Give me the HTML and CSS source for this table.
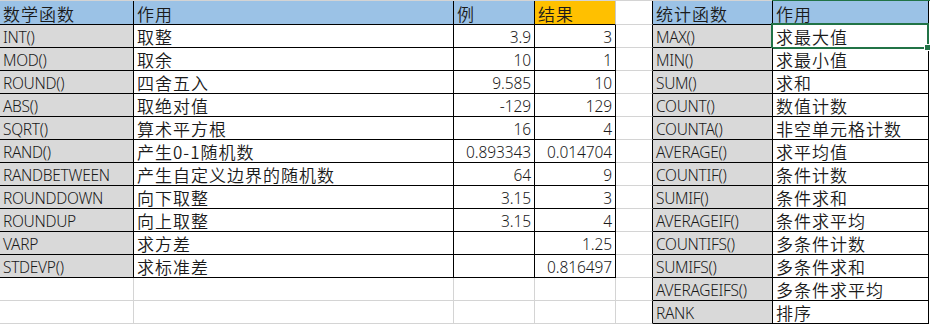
FILE: index.html
```html
<!DOCTYPE html>
<html lang="zh">
<head>
<meta charset="utf-8">
<link rel="stylesheet" href="styles.css">
</head>
<body>
<div class="sheet">
  <!-- row 1 header -->
  <div class="c hd t blue zh">数学函数</div>
  <div class="c hd t blue zh">作用</div>
  <div class="c hd t blue zh">例</div>
  <div class="c hd t orange zh endg">结果</div>
  <div class="c hd eb"></div>
  <div class="c hd t blue zh">统计函数</div>
  <div class="c hd t blue zh topsel">作用</div>
  <div class="c hd x"></div>

  <div class="c t gray en">INT()</div><div class="c t zh">取整</div><div class="c t num">3.9</div><div class="c t num">3</div><div class="c eb"></div><div class="c t gray en">MAX()</div><div class="c t zh sel">求最大值</div><div class="c x"></div>
  <div class="c t gray en">MOD()</div><div class="c t zh">取余</div><div class="c t num">10</div><div class="c t num">1</div><div class="c eb"></div><div class="c t gray en">MIN()</div><div class="c t zh">求最小值</div><div class="c x"></div>
  <div class="c t gray en">ROUND()</div><div class="c t zh">四舍五入</div><div class="c t num">9.585</div><div class="c t num">10</div><div class="c eb"></div><div class="c t gray en">SUM()</div><div class="c t zh">求和</div><div class="c x"></div>
  <div class="c t gray en">ABS()</div><div class="c t zh">取绝对值</div><div class="c t num">-129</div><div class="c t num">129</div><div class="c eb"></div><div class="c t gray en">COUNT()</div><div class="c t zh">数值计数</div><div class="c x"></div>
  <div class="c t gray en">SQRT()</div><div class="c t zh">算术平方根</div><div class="c t num">16</div><div class="c t num">4</div><div class="c eb"></div><div class="c t gray en">COUNTA()</div><div class="c t zh">非空单元格计数</div><div class="c x"></div>
  <div class="c t gray en">RAND()</div><div class="c t zh">产生0-1随机数</div><div class="c t num">0.893343</div><div class="c t num">0.014704</div><div class="c eb"></div><div class="c t gray en">AVERAGE()</div><div class="c t zh">求平均值</div><div class="c x"></div>
  <div class="c t gray en">RANDBETWEEN</div><div class="c t zh">产生自定义边界的随机数</div><div class="c t num">64</div><div class="c t num">9</div><div class="c eb"></div><div class="c t gray en">COUNTIF()</div><div class="c t zh">条件计数</div><div class="c x"></div>
  <div class="c t gray en">ROUNDDOWN</div><div class="c t zh">向下取整</div><div class="c t num">3.15</div><div class="c t num">3</div><div class="c eb"></div><div class="c t gray en">SUMIF()</div><div class="c t zh">条件求和</div><div class="c x"></div>
  <div class="c t gray en">ROUNDUP</div><div class="c t zh">向上取整</div><div class="c t num">3.15</div><div class="c t num">4</div><div class="c eb"></div><div class="c t gray en">AVERAGEIF()</div><div class="c t zh">条件求平均</div><div class="c x"></div>
  <div class="c t gray en">VARP</div><div class="c t zh">求方差</div><div class="c t num"></div><div class="c t num">1.25</div><div class="c eb"></div><div class="c t gray en">COUNTIFS()</div><div class="c t zh">多条件计数</div><div class="c x"></div>
  <div class="c t gray en">STDEVP()</div><div class="c t zh">求标准差</div><div class="c t num"></div><div class="c t num">0.816497</div><div class="c eb"></div><div class="c t gray en">SUMIFS()</div><div class="c t zh">多条件求和</div><div class="c x"></div>
  <div class="c"></div><div class="c"></div><div class="c"></div><div class="c"></div><div class="c eb"></div><div class="c t gray en">AVERAGEIFS()</div><div class="c t zh">多条件求平均</div><div class="c x"></div>
  <div class="c"></div><div class="c"></div><div class="c"></div><div class="c"></div><div class="c eb"></div><div class="c t gray en">RANK</div><div class="c t zh">排序</div><div class="c x"></div>
</div>
</body>
</html>
```

FILE: styles.css
```css
* { box-sizing: border-box; }
html, body { margin: 0; padding: 0; background: #fff; }
body { width: 930px; height: 325px; overflow: hidden; }

.sheet {
  display: grid;
  grid-template-columns: 134px 320px 81px 81px 37px 120px 156px 1fr;
  grid-template-rows: 24px;
  grid-auto-rows: 23px;
  border-top: 1px solid #d4d4d4;
  color: #1a1a1a;
}

.c {
  border-right: 1px solid #d4d4d4;
  border-bottom: 1px solid #d4d4d4;
  white-space: nowrap;
  line-height: 22px;
  height: 23px;
  position: relative;
}
.hd { height: 24px; line-height: 23px; }

.t { border-color: #000; }
.eb { border-right-color: #000; }
.endg { border-right-color: #c8c8c8; }
.x { border: 0; }

.blue { background: #9bc2e6; }
.orange { background: #ffc000; }
.gray { background: #d9d9d9; }

.en {
  font-family: "Noto Sans", "Noto Sans CJK SC", sans-serif;
  font-size: 15.5px;
  font-weight: 300;
  padding-left: 3px;
  padding-top: 1px;
  letter-spacing: -0.3px;
}
.zh {
  font-family: "Noto Sans CJK SC", sans-serif;
  font-size: 17px;
  font-weight: 350;
  letter-spacing: 1px;
  padding-left: 3px;
  padding-top: 1px;
}
.num {
  font-family: "Noto Sans", sans-serif;
  font-size: 15.5px;
  font-weight: 300;
  text-align: right;
  padding-right: 3px;
  padding-top: 1px;
  letter-spacing: -0.1px;
}

.sel::after {
  content: "";
  position: absolute;
  left: -2px;
  top: -2px;
  right: -1px;
  bottom: -2px;
  border: 2px solid #217346;
  pointer-events: none;
}
.sel::before {
  content: "";
  position: absolute;
  right: -3px;
  bottom: -4px;
  width: 5px;
  height: 5px;
  background: #217346;
  border: 1px solid #fff;
  z-index: 2;
}
.topsel::after {
  content: "";
  position: absolute;
  left: -1px;
  right: -2px;
  top: -1px;
  height: 1px;
  background: #217346;
}
```
